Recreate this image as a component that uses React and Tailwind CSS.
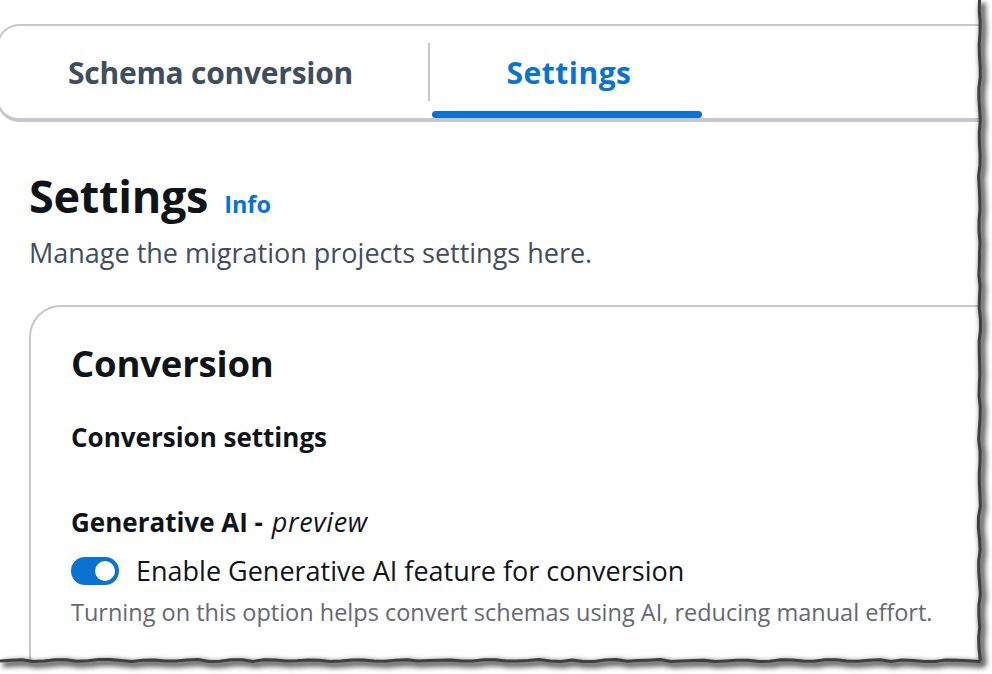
import React from 'react';

const font = { fontFamily: '"Open Sans", "Noto Sans", sans-serif' };

// deterministic jitter for the torn edge
const jitter = (i, amp) => ((Math.sin(i * 12.9898) * 43758.5453) % 1) * amp;

const tornPath = () => {
  const pts = [];
  for (let y = 0; y <= 661; y += 11) pts.push([979.5 + jitter(y, 1.1), y]);
  for (let x = 979; x >= 0; x -= 11) pts.push([x, 660.5 + jitter(x + 3, 1.1)]);
  return 'M' + pts.map(([x, y]) => `${x.toFixed(1)} ${y.toFixed(1)}`).join(' L');
};

const Toggle = ({ on }) => (
  <div className={`relative w-[48px] h-[28px] rounded-full shrink-0 ${on ? 'bg-[#0972d3]' : 'bg-[#8c8c94]'}`}>
    <div className={`absolute top-[4px] w-[20px] h-[20px] rounded-full bg-white ${on ? 'right-[4px]' : 'left-[4px]'}`} />
  </div>
);

const App = () => {
  const d = tornPath();
  return (
    <div className="relative w-[992px] h-[674px] bg-white overflow-hidden" style={font}>
      {/* clipped console page */}
      <div className="relative w-[979px] h-[661px] bg-white overflow-hidden">
        <div className="pt-[24px]">
          {/* Tabs */}
          <div className="-ml-[3px] w-[1100px] h-[98px] flex border-2 border-b-[4px] border-[#c6c6cd] rounded-l-[22px]">
            <div className="flex items-center pl-[69px] pr-[75px] text-[30px] font-bold text-[#414d5c] tracking-[-0.25px]">
              Schema conversion
            </div>
            <div className="w-[2px] bg-[#c6c6cd] my-[17px]" />
            <div className="relative ml-[2px] w-[270px] flex items-center justify-center pl-[4px] text-[30px] font-bold text-[#0972d3] tracking-[0.5px]">
              Settings
              <div className="absolute left-0 right-0 bottom-0 h-[7px] rounded-full bg-[#0972d3]" />
            </div>
          </div>

          {/* Header */}
          <div className="pl-[29px] mt-[48px]">
            <div className="flex items-baseline gap-[16px]">
              <h1 className="text-[45px] leading-[52px] font-bold text-[#0f141a] tracking-[-0.3px]">Settings</h1>
              <span className="text-[23.5px] font-bold text-[#0972d3]">Info</span>
            </div>
            <p className="mt-[15px] text-[27px] leading-[32px] text-[#414d5c]">
              Manage the migration projects settings here.
            </p>
          </div>

          {/* Card */}
          <div className="ml-[29px] mt-[36px] w-[1000px] h-[400px] border-2 border-[#c6c6cd] rounded-tl-[32px] pl-[40px] pt-[34px]">
            <h2 className="text-[36.5px] leading-[44px] font-bold text-[#0f141a] tracking-[-0.2px]">Conversion</h2>
            <h3 className="mt-[36px] text-[26px] leading-[32px] font-bold text-[#0f141a]">Conversion settings</h3>
            <div className="mt-[53px] text-[26px] leading-[32px] font-bold text-[#0f141a]">
              Generative AI - <span className="italic font-medium text-[27px] tracking-[0.6px] ml-[2px]">preview</span>
            </div>
            <div className="mt-[15px] flex items-center gap-[17px] h-[36px]">
              <Toggle on />
              <span className="text-[27px] leading-[36px] text-[#0f141a]">Enable Generative AI feature for conversion</span>
            </div>
            <p className="mt-[9px] text-[23.5px] leading-[28px] text-[#656871]">
              Turning on this option helps convert schemas using AI, reducing manual effort.
            </p>
          </div>
        </div>
      </div>

      {/* torn edge with shadow */}
      <svg className="absolute inset-0 pointer-events-none" width="992" height="674" viewBox="0 0 992 674">
        <defs>
          <filter id="blur" x="-10%" y="-10%" width="120%" height="120%">
            <feGaussianBlur stdDeviation="2.4" />
          </filter>
        </defs>
        <path d={d} fill="none" stroke="rgba(0,0,0,0.6)" strokeWidth="7" transform="translate(3 3)" filter="url(#blur)" strokeLinejoin="round" />
        <path d={d} fill="none" stroke="#3f3f3f" strokeWidth="3" strokeLinejoin="round" />
      </svg>
    </div>
  );
};

export default App;
